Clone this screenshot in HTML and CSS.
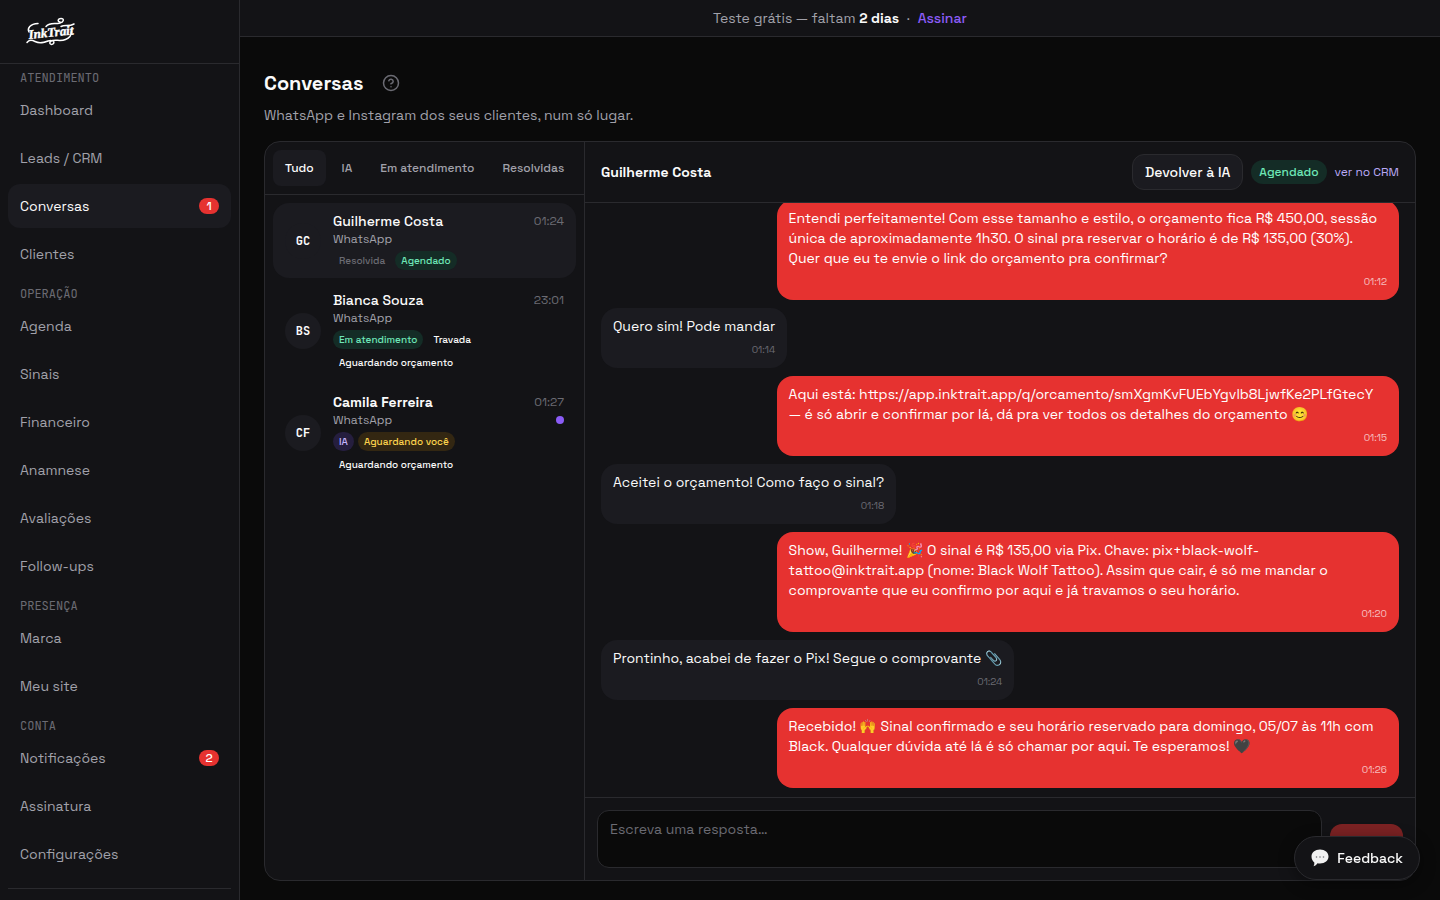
FILE: index.html
```html
<!DOCTYPE html>
<html lang="pt-BR">
<head>
  <meta charset="UTF-8" />
  <meta name="viewport" content="width=device-width, initial-scale=1" />
  <title>Conversas — InkTrait</title>
  <link rel="stylesheet" href="styles.css">
</head>
<body>
  <div class="app">

    <!-- Menu lateral -->
    <aside class="sidebar">
      <a class="brand" href="#" aria-label="InkTrait">
        <svg class="logo" viewBox="0 0 52 32" aria-hidden="true">
          <text class="logo-text" x="5" y="23" transform="rotate(-6 5 23)">InkTrait</text>
          <path d="M5 16C3 12 6 8 14 7.500M22 10.500C26 6 31 8.500 36 7c4-1 4.500-4.500 1-4.500-3 0-4 3-1 3.500M37 10.500c4-2 8 .5 13-2.500" />
          <path d="M3 26.500c2-3 5-2.500 8-1 5 2.500 9 1 13-.500 4-1.500 7 .500 5.500 2.500-2 2-5 0-3-2 4-3 9 .5 15-2 4-1.500 6-4 6-8" />
        </svg>
      </a>
      <nav class="nav">
        <p class="nav-label">ATENDIMENTO</p>
        <a class="nav-item" href="#">Dashboard</a>
        <a class="nav-item" href="#">Leads / CRM</a>
        <a class="nav-item active" href="#" aria-current="page">Conversas <span class="count">1</span></a>
        <a class="nav-item" href="#">Clientes</a>
        <p class="nav-label">OPERAÇÃO</p>
        <a class="nav-item" href="#">Agenda</a>
        <a class="nav-item" href="#">Sinais</a>
        <a class="nav-item" href="#">Financeiro</a>
        <a class="nav-item" href="#">Anamnese</a>
        <a class="nav-item" href="#">Avaliações</a>
        <a class="nav-item" href="#">Follow-ups</a>
        <p class="nav-label">PRESENÇA</p>
        <a class="nav-item" href="#">Marca</a>
        <a class="nav-item" href="#">Meu site</a>
        <p class="nav-label">CONTA</p>
        <a class="nav-item" href="#">Notificações <span class="count">2</span></a>
        <a class="nav-item" href="#">Assinatura</a>
        <a class="nav-item" href="#">Configurações</a>
      </nav>
      <div class="sidebar-footer"></div>
    </aside>

    <div class="content">
      <div class="trial">
        <span>Teste grátis — faltam <strong>2 dias</strong></span>
        <span>·</span>
        <a href="#">Assinar</a>
      </div>

      <main class="page">
        <div class="page-title">
          <h1>Conversas</h1>
          <button class="help" type="button" aria-label="Ajuda">
            <svg viewBox="0 0 24 24" aria-hidden="true">
              <circle cx="12" cy="12" r="10" />
              <path d="M9.090 9a3 3 0 0 1 5.830 1c0 2-3 3-3 3M12 17h.01" />
            </svg>
          </button>
        </div>
        <p class="subtitle">WhatsApp e Instagram dos seus clientes, num só lugar.</p>

        <section class="inbox">
          <!-- Lista de conversas -->
          <div class="list-pane">
            <div class="tabs" role="tablist">
              <button class="tab selected" type="button" role="tab" aria-selected="true">Tudo</button>
              <button class="tab" type="button" role="tab">IA</button>
              <button class="tab" type="button" role="tab">Em atendimento</button>
              <button class="tab" type="button" role="tab">Resolvidas</button>
            </div>
            <div class="threads">
              <a class="thread selected" href="#">
                <span class="avatar">GC</span>
                <span class="thread-body">
                  <span class="row"><span class="name">Guilherme Costa</span><time>01:24</time></span>
                  <span class="row channel">WhatsApp</span>
                  <span class="tags">
                    <span class="tag muted">Resolvida</span>
                    <span class="tag green">Agendado</span>
                  </span>
                </span>
              </a>
              <a class="thread" href="#">
                <span class="avatar">BS</span>
                <span class="thread-body">
                  <span class="row"><span class="name">Bianca Souza</span><time>23:01</time></span>
                  <span class="row channel">WhatsApp</span>
                  <span class="tags">
                    <span class="tag green">Em atendimento</span>
                    <span class="tag">Travada</span>
                    <span class="tag">Aguardando orçamento</span>
                  </span>
                </span>
              </a>
              <a class="thread" href="#">
                <span class="avatar">CF</span>
                <span class="thread-body">
                  <span class="row"><span class="name unread">Camila Ferreira</span><time>01:27</time></span>
                  <span class="row channel">WhatsApp <span class="dot"></span></span>
                  <span class="tags">
                    <span class="tag violet">IA</span>
                    <span class="tag amber">Aguardando você</span>
                    <span class="tag">Aguardando orçamento</span>
                  </span>
                </span>
              </a>
            </div>
          </div>

          <!-- Conversa aberta -->
          <div class="chat">
            <header class="chat-header">
              <h2>Guilherme Costa</h2>
              <button class="return-btn" type="button">Devolver à IA</button>
              <span class="status">Agendado</span>
              <a class="crm-link" href="#">ver no CRM</a>
            </header>
            <div class="messages">
              <div class="bubble out">
                <p>Entendi perfeitamente! Com esse tamanho e estilo, o orçamento fica R$ 450,00, sessão única de aproximadamente 1h30. O sinal pra reservar o horário é de R$ 135,00 (30%). Quer que eu te envie o link do orçamento pra confirmar?</p>
                <time>01:12</time>
              </div>
              <div class="bubble in">
                <p>Quero sim! Pode mandar</p>
                <time>01:14</time>
              </div>
              <div class="bubble out">
                <p>Aqui está: https://app.inktrait.app/q/orcamento/smXgmKvFUEbYgvlb8LjwfKe2PLfGtecY — é só abrir e confirmar por lá, dá pra ver todos os detalhes do orçamento 😊</p>
                <time>01:15</time>
              </div>
              <div class="bubble in">
                <p>Aceitei o orçamento! Como faço o sinal?</p>
                <time>01:18</time>
              </div>
              <div class="bubble out">
                <p>Show, Guilherme! 🎉 O sinal é R$ 135,00 via Pix. Chave: pix+black-wolf-<br>tattoo@inktrait.app (nome: Black Wolf Tattoo). Assim que cair, é só me mandar o comprovante que eu confirmo por aqui e já travamos o seu horário.</p>
                <time>01:20</time>
              </div>
              <div class="bubble in">
                <p>Prontinho, acabei de fazer o Pix! Segue o comprovante 📎</p>
                <time>01:24</time>
              </div>
              <div class="bubble out">
                <p>Recebido! 🙌 Sinal confirmado e seu horário reservado para domingo, 05/07 às 11h com Black. Qualquer dúvida até lá é só chamar por aqui. Te esperamos! 🖤</p>
                <time>01:26</time>
              </div>
            </div>
            <form class="composer">
              <textarea aria-label="Resposta" placeholder="Escreva uma resposta…"></textarea>
              <button class="send" type="button" aria-label="Enviar" disabled></button>
            </form>
          </div>
        </section>
      </main>
    </div>
  </div>

  <button class="feedback" type="button">
    <svg viewBox="0 0 18 18" aria-hidden="true">
      <path class="balloon" d="M9 .5c5 0 8.500 3 8.500 7s-3.500 7-8.500 7c-.9 0-1.700-.1-2.500-.3-1 1.500-2.300 2.600-4 3 .6-1 .9-2.200.8-3.800C1.500 12 .5 10 .5 7.500c0-4 3.500-7 8.500-7z" />
      <path class="dots" d="M5.500 8h.01M9 8h.01M12.500 8h.01" />
    </svg>
    Feedback
  </button>
</body>
</html>
```
FILE: styles.css
```css
:root {
  --bg: #0a0a0a;
  --surface: #131316;
  --raised: #1b1b20;
  --line: #2a2a2e;
  --text: #fafafa;
  --muted: #a1a1aa;
  --faint: #6b6b73;
  --red: #e63230;
  --violet: #8b5cf6;
}

* {
  box-sizing: border-box;
}

body {
  margin: 0;
  background: var(--bg);
  color: var(--text);
  font-family: "Space Grotesk", Inter, "Noto Color Emoji", sans-serif;
  font-size: 14px;
  line-height: 20px;
}

h1, h2, p {
  margin: 0;
}

a {
  color: inherit;
  text-decoration: none;
}

button, textarea {
  font: inherit;
  color: inherit;
}

.app {
  display: flex;
  height: 100vh;
}

/* Menu lateral */
.sidebar {
  display: flex;
  flex-direction: column;
  width: 240px;
  flex-shrink: 0;
  background: var(--surface);
  border-right: 1px solid var(--line);
}

.brand {
  display: flex;
  align-items: center;
  height: 64px;
  flex-shrink: 0;
  padding: 0 24px;
  border-bottom: 1px solid var(--line);
}

.logo {
  width: 52px;
  height: 32px;
}

.logo path {
  fill: none;
  stroke: #fff;
  stroke-width: 1.5;
  stroke-linecap: round;
}

.logo-text {
  fill: #fff;
  stroke: #fff;
  stroke-width: 0.4;
  font: italic bold 13px "Liberation Serif", serif;
}

.nav {
  display: flex;
  flex-direction: column;
  flex: 1;
  gap: 4px;
  min-height: 0;
  padding: 0 8px;
  overflow: hidden;
}

.nav-label {
  flex-shrink: 0;
  padding: 6px 12px 0;
  color: var(--faint);
  font: 12px/16px "JetBrains Mono", "Liberation Mono", monospace;
  height: 20px;
}

.nav-item {
  display: flex;
  align-items: center;
  justify-content: space-between;
  flex-shrink: 0;
  height: 44px;
  padding: 0 12px;
  border-radius: 12px;
  color: var(--muted);
}

.nav-item.active {
  background: var(--raised);
  color: var(--text);
}

.count {
  min-width: 20px;
  padding: 0 6px;
  border-radius: 8px;
  background: var(--red);
  color: #fff;
  font-size: 12px;
  font-weight: 500;
  line-height: 16px;
  text-align: center;
}

.sidebar-footer {
  height: 12px;
  flex-shrink: 0;
  margin: 0 8px;
  border-top: 1px solid var(--line);
}

/* Área principal */
.content {
  flex: 1;
  min-width: 0;
}

.trial {
  display: flex;
  justify-content: center;
  gap: 8px;
  padding: 8px;
  border-bottom: 1px solid var(--line);
  background: var(--surface);
  color: var(--muted);
}

.trial strong {
  color: var(--text);
}

.trial a {
  color: var(--violet);
  font-weight: 500;
}

.page {
  padding: 24px 24px 0;
}

.page-title {
  display: flex;
  align-items: center;
  gap: 6px;
}

h1 {
  font-size: 20px;
  line-height: 28px;
  font-weight: 700;
}

.help {
  display: grid;
  place-items: center;
  width: 44px;
  height: 44px;
  padding: 0;
  border: 0;
  background: none;
  color: var(--faint);
}

.help svg {
  width: 18px;
  height: 18px;
  fill: none;
  stroke: currentColor;
  stroke-width: 2;
  stroke-linecap: round;
}

.subtitle {
  color: var(--muted);
}

.inbox {
  display: flex;
  height: calc(100vh - 160px);
  margin-top: 16px;
  border: 1px solid var(--line);
  border-radius: 16px;
  background: var(--surface);
  overflow: hidden;
}

/* Lista de conversas */
.list-pane {
  width: 320px;
  flex-shrink: 0;
  border-right: 1px solid var(--line);
}

.tabs {
  display: flex;
  gap: 4px;
  padding: 8px;
  border-bottom: 1px solid var(--line);
}

.tab {
  height: 36px;
  padding: 0 12px;
  border: 0;
  border-radius: 8px;
  background: none;
  color: var(--muted);
  font-size: 12px;
  font-weight: 500;
  white-space: nowrap;
}

.tab.selected {
  background: var(--raised);
  color: var(--text);
}

.threads {
  display: flex;
  flex-direction: column;
  gap: 4px;
  padding: 8px;
}

.thread {
  display: flex;
  align-items: center;
  gap: 12px;
  padding: 8px 12px;
  border-radius: 16px;
}

.thread.selected {
  background: var(--raised);
}

.avatar {
  display: grid;
  place-items: center;
  width: 36px;
  height: 36px;
  flex-shrink: 0;
  border-radius: 50%;
  background: var(--raised);
  font: bold 12px "JetBrains Mono", "Liberation Mono", monospace;
}

.thread-body {
  display: block;
  flex: 1;
  min-width: 0;
}

.row {
  display: flex;
  align-items: center;
  justify-content: space-between;
}

.name {
  font-weight: 500;
}

.name.unread {
  font-weight: 600;
}

.thread time {
  color: var(--faint);
  font-size: 12px;
}

.channel {
  color: var(--muted);
  font-size: 12px;
  line-height: 16px;
}

.dot {
  width: 8px;
  height: 8px;
  border-radius: 50%;
  background: var(--violet);
}

.tags {
  display: flex;
  flex-wrap: wrap;
  gap: 4px;
  margin-top: 4px;
}

.tag {
  padding: 2px 6px;
  border-radius: 10px;
  font-size: 10px;
  font-weight: 500;
  line-height: 15px;
}

.tag.muted {
  color: var(--faint);
}

.green, .status {
  background: #142c26;
  color: #6ee7b7;
}

.violet {
  background: #251e3e;
  color: #c4b5fd;
}

.amber {
  background: #332712;
  color: #fcd34d;
}

/* Conversa aberta */
.chat {
  display: flex;
  flex-direction: column;
  flex: 1;
  min-width: 0;
}

.chat-header {
  display: flex;
  align-items: center;
  gap: 8px;
  padding: 12px 16px;
  border-bottom: 1px solid var(--line);
}

.chat-header h2 {
  flex: 1;
  font-size: 14px;
  font-weight: 600;
}

.return-btn {
  height: 36px;
  padding: 0 12px;
  border: 1px solid var(--line);
  border-radius: 12px;
  background: var(--raised);
  font-weight: 500;
}

.status {
  padding: 4px 8px;
  border-radius: 12px;
  font-size: 12px;
  font-weight: 500;
  line-height: 16px;
}

.crm-link {
  color: #b9a9f5;
  font-size: 12px;
}

.messages {
  display: flex;
  flex-direction: column;
  justify-content: flex-end;
  flex: 1;
  gap: 8px;
  min-height: 0;
  padding: 0 16px 9px;
  overflow: hidden;
}

.bubble {
  flex-shrink: 0;
  max-width: 78%;
  padding: 8px 12px;
  border-radius: 16px;
}

.bubble.in {
  align-self: flex-start;
  background: var(--raised);
}

.bubble.out {
  align-self: flex-end;
  background: var(--red);
  color: #fff;
}

.bubble time {
  display: block;
  margin-top: 4px;
  color: var(--faint);
  font-size: 10px;
  text-align: right;
}

.bubble.out time {
  color: rgba(255, 255, 255, 0.7);
}

.composer {
  display: flex;
  align-items: flex-end;
  gap: 8px;
  padding: 12px;
  border-top: 1px solid var(--line);
}

.composer textarea {
  flex: 1;
  height: 58px;
  padding: 8px 12px;
  border: 1px solid var(--line);
  border-radius: 12px;
  background: var(--bg);
  resize: none;
}

.composer textarea::placeholder {
  color: var(--faint);
}

.send {
  width: 73px;
  height: 44px;
  border: 0;
  border-radius: 12px;
  background: var(--red);
  opacity: 0.5;
}

/* Botão flutuante */
.feedback {
  position: fixed;
  right: 20px;
  bottom: 20px;
  display: flex;
  align-items: center;
  gap: 8px;
  height: 44px;
  padding: 0 16px;
  border: 1px solid var(--line);
  border-radius: 22px;
  background: var(--surface);
  box-shadow: 0 4px 16px rgba(0, 0, 0, 0.4);
  font-weight: 500;
}

.feedback svg {
  width: 18px;
  height: 18px;
}

.balloon {
  fill: #f1f1f1;
}

.dots {
  stroke: #77777c;
  stroke-width: 1.6;
  stroke-linecap: round;
}
```
